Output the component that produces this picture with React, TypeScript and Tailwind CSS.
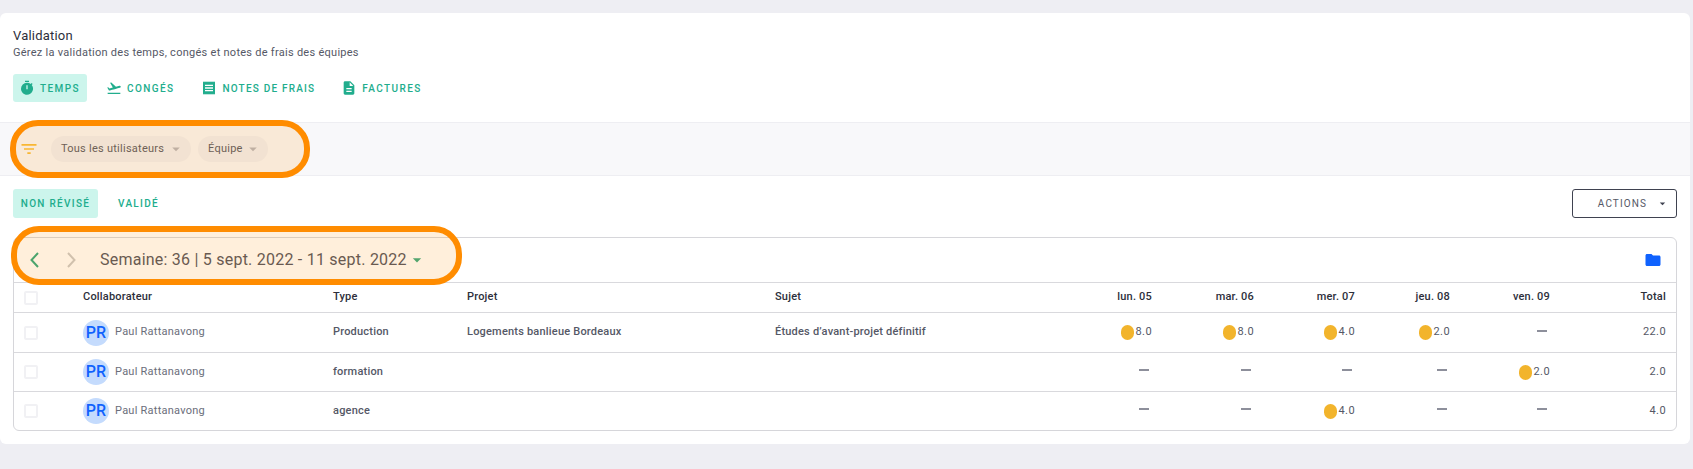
import React from "react";
import { MdTimer, MdFlightTakeoff, MdReceipt, MdDescription, MdFilterList, MdFolder, MdArrowDropDown } from "react-icons/md";

const GRID = "grid grid-cols-[69px_250px_134px_308px_277px_100px_102px_101px_95px_100px_1fr] items-center";

type Day = string | null;
const rows: { type: string; projet: string; sujet: string; days: Day[]; total: string; h: string }[] = [
  { type: "Production", projet: "Logements banlieue Bordeaux", sujet: "Études d’avant-projet définitif", days: ["8.0", "8.0", "4.0", "2.0", null], total: "22.0", h: "h-[40px]" },
  { type: "formation", projet: "", sujet: "", days: [null, null, null, null, "2.0"], total: "2.0", h: "h-[39px]" },
  { type: "agence", projet: "", sujet: "", days: [null, null, "4.0", null, null], total: "4.0", h: "h-[38px]" },
];

function Checkbox() {
  return <div className="ml-[10px] h-[14px] w-[14px] rounded-[2px] border-2 border-[#f1f1f4] bg-white" />;
}

function DayCell({ value }: { value: Day }) {
  if (value === null) {
    return (
      <div className="flex justify-end pb-[4px] pr-[3px]">
        <span className="h-[2px] w-[10px] bg-[#8d8f9b]" />
      </div>
    );
  }
  return (
    <div className="flex items-center justify-end gap-[2px] text-[11px] tracking-[0.4px] text-[#555866]">
      <span className="h-[15px] w-[13px] rounded-full bg-[#f2b42c]" />
      <span>{value}</span>
    </div>
  );
}

function Tab({ icon, label, active, className }: { icon: React.ReactNode; label: string; active?: boolean; className?: string }) {
  return (
    <div className={`flex h-[28px] items-center gap-[5px] rounded-[3px] text-[10px] font-medium text-[#21ad8d] ${active ? "bg-[#ccf5ec]" : ""} ${className ?? ""}`}>
      {icon}
      <span>{label}</span>
    </div>
  );
}

export default function App() {
  return (
    <div className="h-[469px] w-[1693px] overflow-hidden bg-[#eeeef3] pt-[13px] font-['Roboto',sans-serif]">
      <div className="h-[431px] w-[1690px] rounded-[6px] bg-white">
        <div className="h-[109px] px-[13px] pt-[14px]">
          <div className="text-[13px] leading-[17px] tracking-[0.2px] text-[#2d2f3b]">Validation</div>
          <div className="text-[11px] leading-[17px] tracking-[0.27px] text-[#555866]">Gérez la validation des temps, congés et notes de frais des équipes</div>
          <div className="mt-[13px] flex">
            <Tab active className="w-[74px] pl-[6px] tracking-[1.4px]" icon={<MdTimer size={16} />} label="TEMPS" />
            <Tab className="ml-[19px] tracking-[1.4px]" icon={<MdFlightTakeoff size={16} />} label="CONGÉS" />
            <Tab className="ml-[27px] tracking-[1.2px]" icon={<MdReceipt size={16} />} label="NOTES DE FRAIS" />
            <Tab className="ml-[26px] tracking-[1.4px]" icon={<MdDescription size={16} />} label="FACTURES" />
          </div>
        </div>

        <div className="relative flex h-[54px] items-center border-y border-[#eeeef2] bg-[#f8f8fa] pl-[19px]">
          <MdFilterList size={20} className="text-[#f7bd3a]" />
          <div className="ml-[12px] flex h-[26px] w-[140px] items-center justify-between whitespace-nowrap rounded-full bg-[#f0f0f4] pl-[10px] pr-[6px] text-[11px] tracking-[0.25px] text-[#555866]">
            <span>Tous les utilisateurs</span>
            <MdArrowDropDown size={18} className="text-[#b5b5bd]" />
          </div>
          <div className="ml-[7px] flex h-[26px] w-[70px] items-center justify-between rounded-full bg-[#f0f0f4] pl-[10px] pr-[6px] text-[11px] tracking-[0.25px] text-[#555866]">
            <span>Équipe</span>
            <MdArrowDropDown size={18} className="text-[#b5b5bd]" />
          </div>
          <div className="absolute left-[10px] top-[-3px] h-[58px] w-[300px] rounded-[28px] border-[6px] border-[#ff8c00] bg-[#ff8c00]/14" />
        </div>

        <div className="flex h-[42px] items-end justify-between px-[13px]">
          <div className="flex h-[29px] items-center">
            <div className="flex h-[29px] w-[85px] items-center justify-center rounded-[3px] bg-[#ccf5ec] text-[10px] font-medium tracking-[1.3px] text-[#21ad8d]">NON RÉVISÉ</div>
            <div className="ml-[20px] text-[10px] font-medium tracking-[1.3px] text-[#21ad8d]">VALIDÉ</div>
          </div>
          <div className="flex h-[29px] w-[105px] items-center justify-end rounded-[3px] border border-[#3f4250] pr-[7px] text-[10px] tracking-[1.1px] text-[#555866]">
            <span>ACTIONS</span>
            <MdArrowDropDown size={13} className="ml-[9px] text-[#3f4250]" />
          </div>
        </div>

        <div className="relative mx-[13px] mt-[19px] w-[1664px] rounded-[6px] border border-[#d6d6da]">
          <div className="relative flex h-[45px] items-center border-b border-[#d9d9dd]">
            <svg width="9" height="16" viewBox="0 0 9 16" fill="none" className="ml-[16px] text-[#2ea87f]">
              <path d="M8 1 1.5 8 8 15" stroke="currentColor" strokeWidth="2" />
            </svg>
            <svg width="9" height="16" viewBox="0 0 9 16" fill="none" className="ml-[28px] text-[#c9c9c9]">
              <path d="M1 1 7.5 8 1 15" stroke="currentColor" strokeWidth="2" />
            </svg>
            <div className="ml-[24px] text-[16px] font-normal tracking-[0.23px] text-[#50525e]">Semaine: 36 | 5 sept. 2022 - 11 sept. 2022</div>
            <MdArrowDropDown size={20} className="text-[#37a97f]" />
            <MdFolder size={18} className="ml-auto mr-[14px] text-[#0f62fe]" />
          </div>
          <div className={`${GRID} h-[30px] border-b border-[#d9d9dd] text-[11px] font-medium tracking-[0.2px] text-[#2d2f3b]`}>
            <Checkbox />
            <div>Collaborateur</div>
            <div>Type</div>
            <div>Projet</div>
            <div>Sujet</div>
            <div className="text-right">lun. 05</div>
            <div className="text-right">mar. 06</div>
            <div className="text-right">mer. 07</div>
            <div className="text-right">jeu. 08</div>
            <div className="text-right">ven. 09</div>
            <div className="pr-[10px] text-right">Total</div>
          </div>
          {rows.map((r, i) => (
            <div key={i} className={`${GRID} ${r.h} ${i < 2 ? "border-b border-[#d9d9dd]" : ""} text-[11px] tracking-[0.2px] text-[#555866]`}>
              <Checkbox />
              <div className="flex items-center gap-[6px]">
                <div className="flex h-[26px] w-[26px] items-center justify-center rounded-full bg-[#c4dbfd] text-[16px] font-medium tracking-normal text-[#0f62fe]">PR</div>
                <span className="tracking-[0.25px] text-[#6b6e7b]">Paul Rattanavong</span>
              </div>
              <div className="font-medium">{r.type}</div>
              <div className="font-medium">{r.projet}</div>
              <div className="font-medium">{r.sujet}</div>
              {r.days.map((d, j) => <DayCell key={j} value={d} />)}
              <div className="pr-[10px] text-right tracking-[0.4px]">{r.total}</div>
            </div>
          ))}
          <div className="absolute left-[-3px] top-[-12px] h-[59px] w-[451px] rounded-[28px] border-[6px] border-[#ff8c00] bg-[#ff8c00]/14" />
        </div>
      </div>
    </div>
  );
}
